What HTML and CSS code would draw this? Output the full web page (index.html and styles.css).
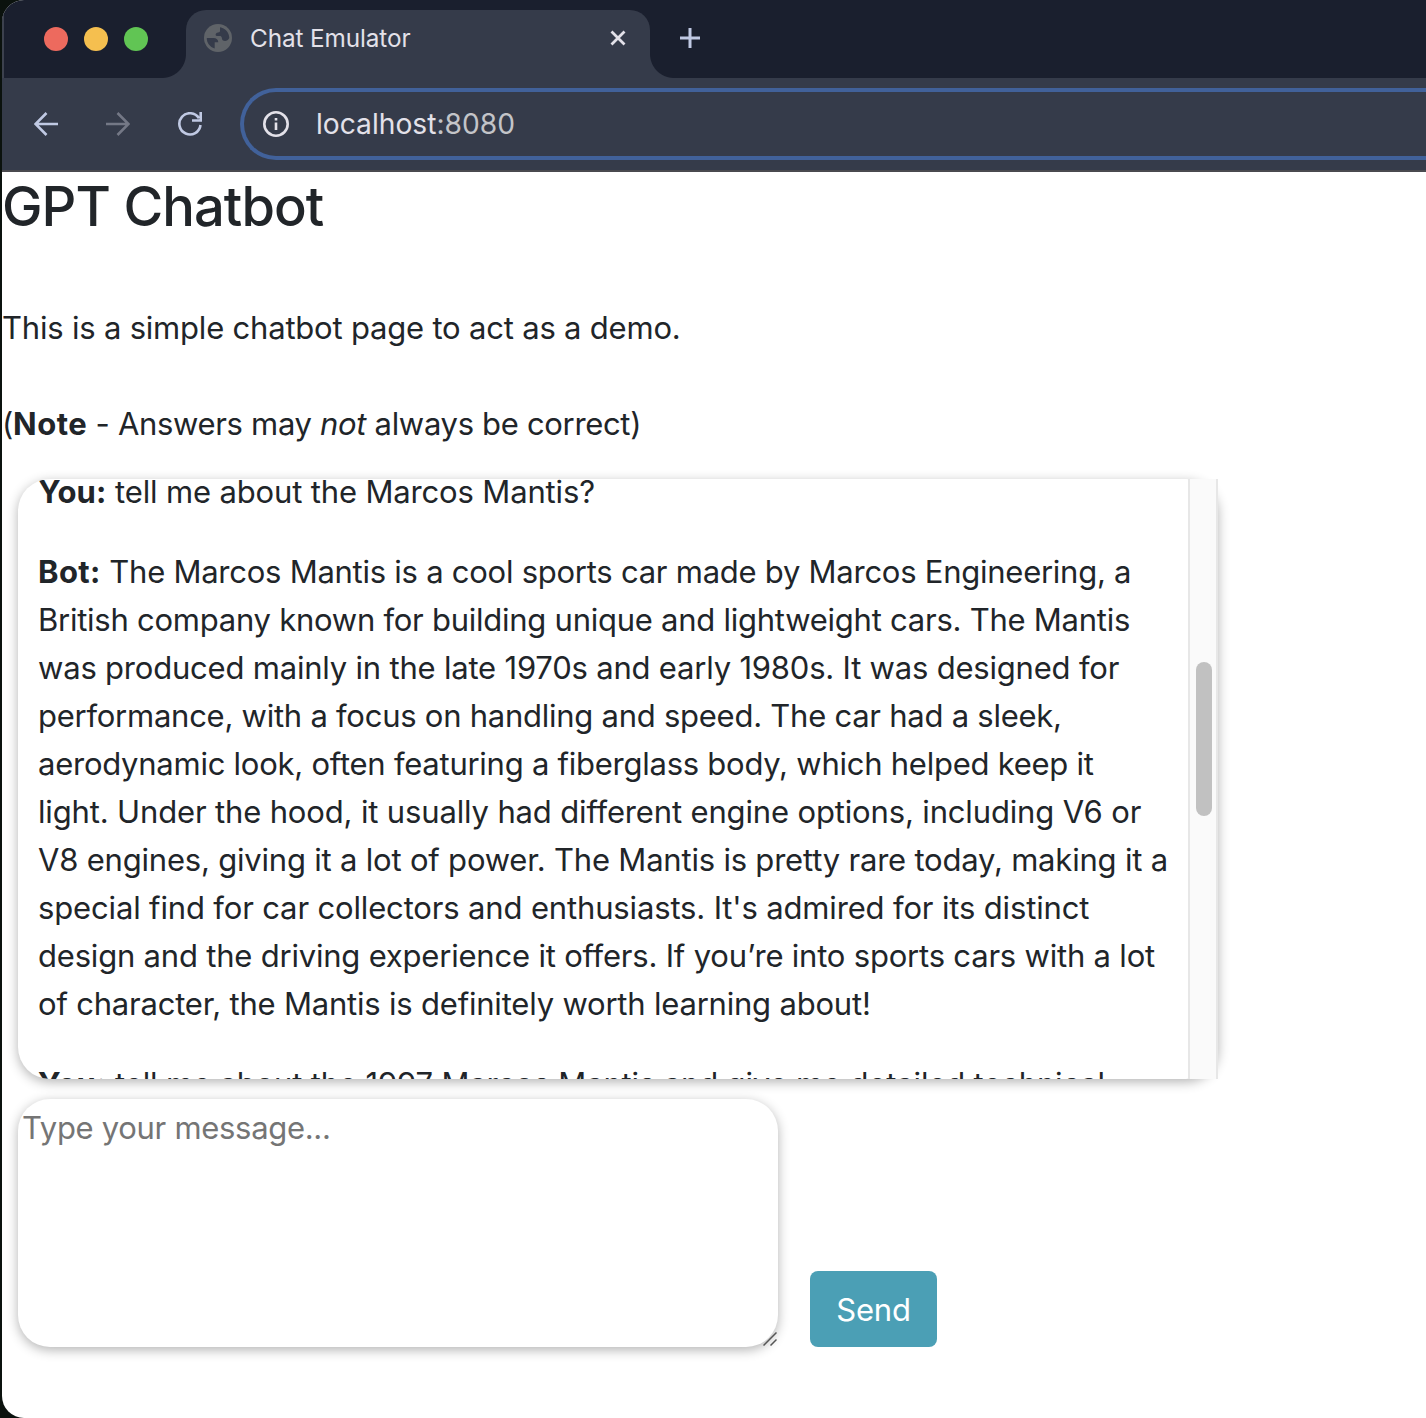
FILE: index.html
```html
<!DOCTYPE html>
<html lang="en">
<head>
<meta charset="utf-8">
<title>Chat Emulator</title>
<link rel="stylesheet" href="styles.css">
</head>
<body>
<div class="window">
  <header class="tabstrip">
    <div class="lights"><i class="light red"></i><i class="light yellow"></i><i class="light green"></i></div>
    <div class="tab">
      <svg class="globe" viewBox="0 0 28 28"><circle cx="14" cy="14" r="14" fill="#5f6368"/><path d="M2.800 14H9.500C12.500 14 14.300 15.800 14.300 18.300H10.700V24.400C6 23 2.600 19 2.800 14ZM16 3.200C21 4 25.200 8 25.300 14C24 17 21 17.500 19 16.500C17.500 15.500 18.500 13 16.500 12H13C11.500 12 11 10 12.500 9C14.500 8.500 16.500 8 16 6.500Z" fill="#353b4a"/></svg>
      <span class="tab-title">Chat Emulator</span>
      <svg class="close" viewBox="0 0 16 16"><path d="M1.500 1.500L14.500 14.500M14.500 1.500L1.500 14.500"/></svg>
    </div>
    <svg class="plus" viewBox="0 0 20 20"><path d="M10 0V20M0 10H20"/></svg>
  </header>
  <nav class="toolbar">
    <svg class="nav-icon" viewBox="0 0 24 24"><path d="M24 12H2M12.500 1L1.500 12L12.500 23"/></svg>
    <svg class="nav-icon dim" viewBox="0 0 24 24"><path d="M0 12H22M11.500 1L22.500 12L11.500 23"/></svg>
    <svg class="nav-icon" viewBox="0 0 24 24"><path d="M21 6.300A10.600 10.600 0 1 0 22.500 13M22.700 0V8.500H14"/></svg>
    <div class="address">
      <svg class="info" viewBox="0 0 26 26"><circle cx="13" cy="13" r="11.700"/><path d="M13 11.500V19M13 7V9.500"/></svg>
      <span class="url">localhost<span class="port">:8080</span></span>
    </div>
  </nav>
  <main class="page">
    <h1 class="title">GPT Chatbot</h1>
    <p class="intro">This is a simple chatbot page to act as a demo.</p>
    <p class="note">(<b>Note</b> - Answers may <i>not</i> always be correct)</p>
    <div class="chat">
      <div class="messages">
        <p class="loose"><b>You:</b> tell me about the Marcos Mantis?</p>
        <p><span class="snug"><b>Bot:</b> The Marcos Mantis is a cool sports car made by Marcos Engineering, a</span><br>
        <span class="snug">British company known for building unique and lightweight cars. The Mantis</span><br>
        <span>was produced mainly in the late 1970s and early 1980s. It was designed for</span><br>
        <span class="snug">performance, with a focus on handling and speed. The car had a sleek,</span><br>
        <span class="snug">aerodynamic look, often featuring a fiberglass body, which helped keep it</span><br>
        <span class="loose">light. Under the hood, it usually had different engine options, including V6 or</span><br>
        <span>V8 engines, giving it a lot of power. The Mantis is pretty rare today, making it a</span><br>
        <span class="loose">special find for car collectors and enthusiasts. It's admired for its distinct</span><br>
        <span>design and the driving experience it offers. If you’re into sports cars with a lot</span><br>
        <span>of character, the Mantis is definitely worth learning about!</span></p>
        <p class="loose"><b>You:</b> tell me about the 1997 Marcos Mantis and give me detailed technical</p>
      </div>
      <div class="scrollbar"><div class="thumb"></div></div>
    </div>
    <div class="composer">
      <div class="input">Type your message...<svg class="grip" viewBox="0 0 14 14"><path d="M0.500 13.500L13.500 0.500M7.500 13.500L13.500 7.500"/></svg></div>
      <button class="send">Send</button>
    </div>
  </main>
</div>
</body>
</html>
```
FILE: styles.css
```css
* { box-sizing: border-box; }
body { margin: 0; background: #0b120e; font-family: Inter, "Liberation Sans", sans-serif; color: #212529; }
p, h1 { margin: 0; }
.window { height: 1418px; margin-left: 2px; display: flex; flex-direction: column; overflow: hidden; background: #fff; border-radius: 22px 0 0 22px; }
.tabstrip { height: 78px; flex: none; display: flex; background: #1a1f2e; border-left: 2px solid #3c414e; }
.lights { display: flex; gap: 16px; padding: 27px 0 0 40px; width: 182px; }
.light { width: 24px; height: 24px; border-radius: 50%; }
.red { background: #ed6a5e; }
.yellow { background: #f5bf4f; }
.green { background: #61c554; }
.tab { position: relative; display: flex; align-items: center; width: 464px; height: 68px; margin-top: 10px; padding: 0 24px 12px 18px; background: #353b4a; border-radius: 20px 20px 0 0; }
.tab::before, .tab::after { content: ""; position: absolute; bottom: 0; width: 24px; height: 24px; }
.tab::before { right: 100%; background: radial-gradient(circle at 0 0, transparent 23.500px, #353b4a 24.500px); }
.tab::after { left: 100%; background: radial-gradient(circle at 100% 0, transparent 23.500px, #353b4a 24.500px); }
.globe { width: 28px; height: 28px; }
.tab-title { flex: 1; margin-left: 18px; font-size: 24.300px; letter-spacing: -.1px; color: #e3e1e9; }
.close { width: 16px; height: 16px; fill: none; stroke: #e3e1e9; stroke-width: 2.800; }
.plus { width: 20px; height: 20px; margin: 28px 0 0 30px; stroke: #c0c9e3; stroke-width: 3; }
.toolbar { height: 94px; flex: none; display: flex; align-items: center; gap: 48px; padding: 0 0 0 32px; background: #353b4a; border-bottom: 2px solid #4a4a4f; }
.nav-icon { width: 24px; height: 24px; fill: none; stroke: #c0c9e3; stroke-width: 2.600; }
.dim { stroke: #747886; }
.address { flex: 1; display: flex; align-items: center; height: 72px; margin-left: -10px; padding-left: 19px; border: 4px solid #41619a; border-right: 0; border-radius: 36px 0 0 36px; }
.info { width: 26px; height: 26px; fill: none; stroke: #e3e1e9; stroke-width: 2.600; }
.url { margin-left: 27px; font-size: 28.200px; color: #e3e1e9; }
.port { color: #c3c4c8; }
.page { font-size: 31px; line-height: 48px; letter-spacing: -.2px; }
.page b { letter-spacing: .15px; }
.snug { letter-spacing: -.25px; }
.loose { letter-spacing: -.15px; }
.title { padding-top: 1px; font-size: 54.250px; line-height: 67px; font-weight: 500; letter-spacing: -.95px; }
.intro { margin-top: 64px; }
.note { margin-top: 48px; letter-spacing: -.32px; }
.note b { letter-spacing: .5px; }
.snug b { letter-spacing: .4px; }
.chat { display: flex; width: 1200px; height: 600px; margin: 31px 0 0 16px; border-radius: 32px; box-shadow: 0 3px 12px rgba(0,0,0,.3); }
.messages { width: 1170px; padding-left: 20px; overflow: hidden; border-radius: 32px 0 0 32px; white-space: nowrap; }
.messages p { margin: 0 0 32px; }
.messages p:first-child { margin-top: -11px; }
.scrollbar { width: 30px; padding: 183px 0 0 6px; background: #fafafa; border: solid #e7e7e7; border-width: 0 2px; }
.thumb { width: 16px; height: 154px; border-radius: 8px; background: #c1c1c1; }
.composer { display: flex; align-items: flex-end; gap: 32px; margin: 20px 0 0 16px; }
.input { position: relative; width: 760px; height: 248px; padding: 5px 5px 5px 4px; border-radius: 32px; color: #757575; letter-spacing: -.3px; box-shadow: 0 3px 12px rgba(0,0,0,.3); }
.grip { position: absolute; right: 1px; bottom: 1px; width: 14px; height: 14px; stroke: #555; stroke-width: 1.500; }
.send { width: 127px; height: 76px; padding: 2px 0 0; border: 0; border-radius: 8px; background: #4b9fb5; color: #fff; font: 31px/48px Inter, "Liberation Sans", sans-serif; letter-spacing: -.15px; }
```
